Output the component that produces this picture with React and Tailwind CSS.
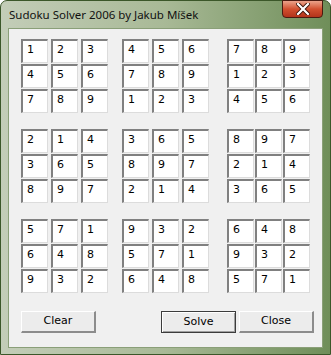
const blocks = [
  [[1, 2, 3], [4, 5, 6], [7, 8, 9]],
  [[4, 5, 6], [7, 8, 9], [1, 2, 3]],
  [[7, 8, 9], [1, 2, 3], [4, 5, 6]],
  [[2, 1, 4], [3, 6, 5], [8, 9, 7]],
  [[3, 6, 5], [8, 9, 7], [2, 1, 4]],
  [[8, 9, 7], [2, 1, 4], [3, 6, 5]],
  [[5, 7, 1], [6, 4, 8], [9, 3, 2]],
  [[9, 3, 2], [5, 7, 1], [6, 4, 8]],
  [[6, 4, 8], [9, 3, 2], [5, 7, 1]],
];

const Cell = ({ value }) => (
  <div className="w-[27px] h-[24px] bg-white border-t-2 border-l-2 border-t-[#808080] border-l-[#808080] border-r border-b border-r-[#dcdcdc] border-b-[#dcdcdc] pl-[4px] pt-[2px] text-[11px] leading-[14px] text-black">
    {value}
  </div>
);

const Block = ({ rows, gapClass }) => (
  <div className="flex flex-col gap-[1px]">
    {rows.map((row, i) => (
      <div key={i} className={`flex ${gapClass}`}>
        {row.map((v, j) => (
          <Cell key={j} value={v} />
        ))}
      </div>
    ))}
  </div>
);

const Button = ({ label, primary }) => (
  <div
    className={`w-[75px] h-[22px] flex items-center justify-center text-[11px] text-black bg-[#ececec] ${
      primary
        ? 'border border-[#3c3c3c] shadow-[inset_1px_1px_0_#ffffff,inset_-1px_-1px_0_#a0a0a0]'
        : 'border-t border-l border-t-white border-l-white border-r-2 border-b-2 border-r-[#8c8c8c] border-b-[#8c8c8c]'
    }`}
  >
    {label}
  </div>
);

export default function App() {
  return (
    <div className="w-[331px] h-[355px] bg-white" style={{ fontFamily: 'Tahoma, "DejaVu Sans", sans-serif' }}>
      <div className="w-[331px] h-[355px] flex flex-col rounded-t-[7px] border border-[#3b5729] bg-gradient-to-r from-[#c3cdb8] via-[#a8b996] to-[#6f8e59]">
        <div className="h-[27px] flex items-start justify-between pl-[8px] pr-[7px]">
          <span
            className="mt-[7px] text-[11.5px] leading-[14px] text-[#111]"
            style={{ fontFamily: '"Noto Sans", "Open Sans", sans-serif' }}
          >
            Sudoku Solver 2006 by Jakub Míšek
          </span>
          <div className="w-[41px] h-[18px] -mt-px rounded-b-[4px] border border-[#4a1a10] bg-gradient-to-b from-[#eaa28a] via-[#d2502f] to-[#b3331b] flex items-center justify-center">
            <svg width="14" height="12" viewBox="0 0 14 12">
              <path d="M2 1 L12 11 M12 1 L2 11" stroke="#3a1208" strokeWidth="4" strokeLinecap="square" />
              <path d="M2 1 L12 11 M12 1 L2 11" stroke="#ffffff" strokeWidth="2.2" strokeLinecap="square" />
            </svg>
          </div>
        </div>
        <div className="ml-[7px] w-[315px] h-[320px] border border-[#8a9f78] bg-[#f0f0f0] pl-[12px] pt-[10px]">
          <div className="flex flex-col">
            {[0, 1, 2].map((br) => (
              <div key={br} className={`flex ${br > 0 ? 'mt-[16px]' : ''}`}>
                <div className="w-[101px]">
                  <Block rows={blocks[br * 3]} gapClass="gap-[3px]" />
                </div>
                <div className="w-[105px]">
                  <Block rows={blocks[br * 3 + 1]} gapClass="gap-[3px]" />
                </div>
                <Block rows={blocks[br * 3 + 2]} gapClass="gap-[1px]" />
              </div>
            ))}
          </div>
          <div className="flex mt-[18px]">
            <Button label="Clear" />
            <div className="ml-[65px] flex gap-[3px]">
              <Button label="Solve" primary />
              <Button label="Close" />
            </div>
          </div>
        </div>
      </div>
    </div>
  );
}
